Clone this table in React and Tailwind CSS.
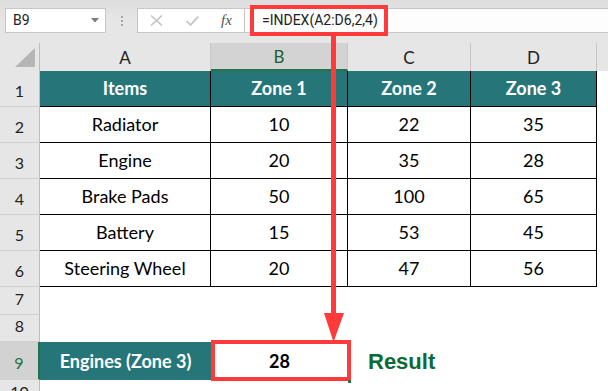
import React from 'react';

// Sheet data: header row + item rows
const header = ['Items', 'Zone 1', 'Zone 2', 'Zone 3'];
const rows = [
  ['Radiator', 10, 22, 35],
  ['Engine', 20, 35, 28],
  ['Brake Pads', 50, 100, 65],
  ['Battery', 15, 53, 45],
  ['Steering Wheel', 20, 47, 56],
];
const letters = ['A', 'B', 'C', 'D'];

const RowHead = ({ n, active }) => (
  <div
    className={
      active
        ? 'bg-[#d2d2d2] border-r-2 border-r-[#217346] border-b border-b-[#d0d0d0] flex items-end justify-center pb-[4px] text-[16px] text-[#217346]'
        : 'bg-[#e6e6e6] border-r border-r-[#bdbdbd] border-b border-b-[#d0d0d0] flex items-end justify-center pb-[3px] text-[16px] text-[#222]'
    }
  >
    {n}
  </div>
);

const FormulaBar = () => (
  <div className="h-[43px] bg-[#e6e6e6] flex items-start pt-[8px] bg-gradient-to-b from-[#dedede] via-[#e6e6e6] to-[#e6e6e6]">
    {/* name box */}
    <div className="ml-[5px] w-[101px] h-[25px] bg-white border border-[#c6c6c6] flex items-center justify-between pl-[7px] pr-[6px]">
      <span className="font-['Roboto',sans-serif] text-[14px] text-[#222]">B9</span>
      <svg width="8" height="5" viewBox="0 0 8 5">
        <path d="M0 0 L8 0 L4 4.5 Z" fill="#7a7a7a" />
      </svg>
    </div>
    <div className="ml-[15px] h-[25px] flex flex-col justify-center gap-[2px]">
      <span className="w-[2px] h-[2px] bg-[#a8a8a8]" />
      <span className="w-[2px] h-[2px] bg-[#a8a8a8]" />
      <span className="w-[2px] h-[2px] bg-[#a8a8a8]" />
    </div>
    {/* cancel / enter / fx */}
    <div className="ml-[14px] w-[108px] h-[25px] bg-white border border-[#c6c6c6] flex items-center">
      <svg className="ml-[12px]" width="13" height="11" viewBox="0 0 13 11">
        <path d="M1 0.5 L12 10.5 M12 0.5 L1 10.5" stroke="#c4c4c4" strokeWidth="1.6" />
      </svg>
      <svg className="ml-[23px]" width="13" height="10" viewBox="0 0 13 10">
        <path d="M0.8 5 L4.5 9 L12.3 0.7" stroke="#c4c4c4" strokeWidth="1.8" fill="none" />
      </svg>
      <span className="ml-[22px] font-['Liberation_Serif',serif] italic text-[15px] text-[#555] leading-none">
        fx
      </span>
    </div>
    <div className="flex-1 h-[25px] bg-[#fdfdfd] border-y border-[#c6c6c6] flex items-center pl-[17px]">
      <span className="font-['Roboto',sans-serif] text-[14px] text-[#222]">=INDEX(A2:D6,2,4)</span>
    </div>
  </div>
);

export default function App() {
  return (
    <div className="relative w-[608px] h-[391px] overflow-hidden bg-white font-['Lato',sans-serif]">
      <FormulaBar />

      <div className="grid grid-cols-[40px_171px_137px_123px_126px_11px] grid-rows-[28px_36px_36px_36px_36px_36px_36px_28px_27px_38px_28px]">
        {/* column letters */}
        <div className="bg-[#e6e6e6] border-r border-[#bdbdbd] flex items-end justify-end pr-[4px] pb-[4px]">
          <svg width="20" height="19" viewBox="0 0 20 19">
            <path d="M20 0 L20 19 L0 19 Z" fill="#b5b5b5" />
          </svg>
        </div>
        {letters.map((l) => (
          <div
            key={l}
            className={
              l === 'B'
                ? 'bg-[#d3d3d3] border-r border-r-[#c6c6c6] border-b-2 border-b-[#217346] flex items-center justify-center text-[17px] text-[#1d5e3a] pt-[2px]'
                : 'bg-[#e6e6e6] border-r border-[#c6c6c6] flex items-center justify-center text-[17px] text-[#222] pt-[2px]'
            }
          >
            {l}
          </div>
        ))}
        <div className="bg-[#e6e6e6]" />

        {/* row 1: header */}
        <RowHead n={1} />
        {header.map((h) => (
          <div
            key={h}
            className="bg-[#267679] border-r border-b border-black flex items-center justify-center text-white font-bold text-[18px]"
          >
            {h}
          </div>
        ))}
        <div />

        {/* rows 2-6 */}
        {rows.map((r, i) => (
          <React.Fragment key={r[0]}>
            <RowHead n={i + 2} />
            {r.map((v, j) => (
              <div
                key={j}
                className="border-r border-b border-black flex items-center justify-center text-[18px] text-black"
              >
                {v}
              </div>
            ))}
            <div />
          </React.Fragment>
        ))}

        {/* rows 7-8 empty */}
        <RowHead n={7} />
        <div className="col-span-5" />
        <RowHead n={8} />
        <div className="col-span-5" />

        {/* row 9: lookup result */}
        <RowHead n={9} active />
        <div className="bg-[#267679] flex items-center justify-center text-white font-bold text-[18px]">
          Engines (Zone 3)
        </div>
        <div className="flex items-center justify-center font-bold text-[18px] text-black">28</div>
        <div className="col-span-2 flex items-center pl-[20px] pt-[1px] font-['Liberation_Sans',sans-serif] font-bold text-[22px] text-[#0b6a36]">
          Result
        </div>
        <div />

        <RowHead n={10} />
        <div className="col-span-5" />
      </div>

      {/* callout: formula box, arrow, result box */}
      <svg className="absolute inset-0 pointer-events-none" width="608" height="391" viewBox="0 0 608 391">
        <rect x="252" y="7" width="134" height="27" fill="none" stroke="#ff3a3a" strokeWidth="4" />
        <rect x="331" y="36" width="5" height="278" fill="#ff3a3a" />
        <path d="M324 313 L344 313 L333.5 342 Z" fill="#ff3a3a" />
        <rect x="213" y="342" width="136" height="37" fill="none" stroke="#ff3a3a" strokeWidth="4" />
        <rect x="348" y="380" width="3" height="3" fill="#217346" />
      </svg>
    </div>
  );
}
